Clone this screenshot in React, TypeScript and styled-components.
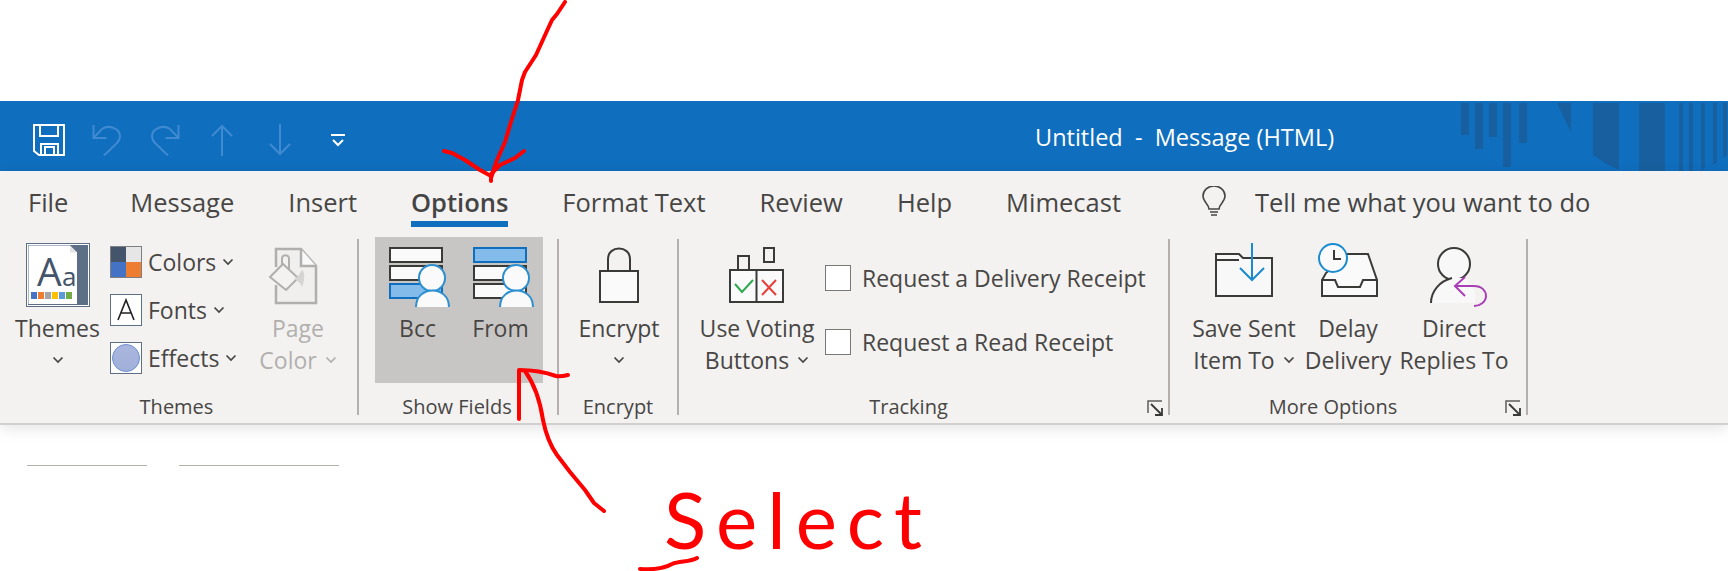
import styled, { createGlobalStyle } from 'styled-components';

const GlobalStyle = createGlobalStyle`
  html, body {
    margin: 0;
    padding: 0;
    background: #fff;
    overflow: hidden;
  }
  body {
    font-family: "Open Sans", "Noto Sans", "Liberation Sans", sans-serif;
    color: #444;
  }
`;

const Page = styled.div`
  position: relative;
  width: 1728px;
  height: 571px;
  overflow: hidden;
  padding-top: 101px;
  box-sizing: border-box;
`;

const TitleBar = styled.div`
  position: relative;
  height: 70px;
  background: #106ebe;
  display: flex;
  align-items: center;
  padding-left: 33px;
`;

const QuickAccess = styled.div`
  display: flex;
  align-items: center;
  width: 1002px;
  margin-top: 8px;
`;

const QatSlot = styled.span<{ $width: number }>`
  display: flex;
  width: ${({ $width }) => $width}px;
`;

const Title = styled.div`
  position: relative;
  color: #fff;
  font-size: 23.5px;
  margin-top: 2px;
  white-space: pre;
  z-index: 1;
`;

const TitleArt = styled.svg`
  position: absolute;
  top: 0;
  right: 0;
`;

const Ribbon = styled.div`
  height: 254px;
  background: #f3f2f1;
  border-bottom: 2px solid #d2d0ce;
  box-sizing: border-box;
  box-shadow: 0 4px 14px rgba(0, 0, 0, 0.1);
  position: relative;
`;

const TabRow = styled.div`
  height: 66px;
  display: flex;
  align-items: flex-start;
  gap: 54px;
  padding-left: 28px;
  font-size: 25.5px;
`;

const Tab = styled.div<{ $active?: boolean; $wide?: boolean }>`
  height: 50px;
  margin-top: 6px;
  line-height: 50px;
  margin-right: ${({ $wide }) => ($wide ? 8 : 0)}px;
  font-weight: ${({ $active }) => ($active ? 600 : 400)};
  color: ${({ $active }) => ($active ? '#444' : '#484644')};
  box-shadow: ${({ $active }) => ($active ? 'inset 0 -6px 0 #106ebe' : 'none')};
`;

const TellMe = styled.div`
  display: flex;
  align-items: center;
  gap: 29px;
  height: 50px;
  margin: 6px 0 0 27px;
`;

const GroupRow = styled.div`
  display: flex;
  height: 184px;
`;

const Group = styled.section<{ $width: number }>`
  position: relative;
  width: ${({ $width }) => $width}px;
  display: flex;
  flex-direction: column;
  &::after {
    content: '';
    position: absolute;
    top: 2px;
    right: 0;
    width: 2px;
    height: 176px;
    background: #b3b0ad;
  }
`;

const GroupBody = styled.div<{ $pad: number }>`
  display: flex;
  height: 146px;
  padding-left: ${({ $pad }) => $pad}px;
  box-sizing: border-box;
`;

const SelectedArea = styled.div`
  display: flex;
  background: #c8c6c4;
  width: 168px;
  height: 146px;
  padding-left: 14px;
  box-sizing: border-box;
`;

const GroupLabel = styled.div<{ $shift?: number }>`
  height: 38px;
  line-height: 48px;
  text-align: center;
  font-size: 20px;
  color: #484644;
  transform: translateX(${({ $shift }) => $shift ?? 0}px);
`;

const LargeButton = styled.div<{ $width: number; $disabled?: boolean; $gap?: number }>`
  width: ${({ $width }) => $width}px;
  margin-right: ${({ $gap }) => $gap ?? 0}px;
  display: flex;
  flex-direction: column;
  align-items: center;
  font-size: 23px;
  line-height: 32px;
  color: ${({ $disabled }) => ($disabled ? '#b1afad' : '#484644')};
  white-space: nowrap;
  flex-shrink: 0;
`;

const IconBox = styled.div<{ $top: number; $shift?: number }>`
  height: 75px;
  box-sizing: border-box;
  padding-top: ${({ $top }) => $top}px;
  display: flex;
  align-items: flex-start;
  transform: translateX(${({ $shift }) => $shift ?? 0}px);
`;

const LabelLine = styled.div`
  display: flex;
  align-items: center;
  justify-content: center;
  gap: 8px;
  height: 32px;
`;

const SmallColumn = styled.div`
  width: 138px;
  margin-left: 10px;
  padding-top: 9px;
  display: flex;
  flex-direction: column;
  gap: 16px;
  flex-shrink: 0;
`;

const SmallItem = styled.div`
  display: flex;
  align-items: center;
  height: 32px;
  gap: 6px;
  font-size: 23px;
  color: #484644;
`;

const CheckColumn = styled.div`
  margin: 28px 0 0 9px;
  display: flex;
  flex-direction: column;
  gap: 38px;
`;

const CheckRow = styled.div`
  display: flex;
  align-items: center;
  gap: 11px;
  height: 26px;
  font-size: 23px;
  color: #484644;
  white-space: nowrap;
`;

const Box = styled.span`
  width: 26px;
  height: 26px;
  box-sizing: border-box;
  border: 1px solid #7a7876;
  background: #fff;
`;

const Launcher = styled.svg`
  position: absolute;
  right: 7px;
  top: 163px;
`;

const DocumentRow = styled.div`
  display: flex;
  gap: 32px;
  padding: 40px 0 0 27px;
`;

const FieldRule = styled.div<{ $width: number }>`
  width: ${({ $width }) => $width}px;
  height: 1px;
  background: #b3b0ad;
`;

const Annotation = styled.svg`
  position: absolute;
  inset: 0;
  pointer-events: none;
  z-index: 5;
`;

const Scrawl = styled.div`
  position: absolute;
  left: 664px;
  top: 474px;
  font-family: "Lato", "Open Sans", sans-serif;
  font-size: 78px;
  line-height: 90px;
  letter-spacing: 10px;
  color: #f00;
  z-index: 6;
`;

const Chevron = ({ color = '#484644' }: { color?: string }) => (
  <svg width="12" height="8" viewBox="0 0 12 8">
    <path d="M1.5 1.5 6 6l4.5-4.5" fill="none" stroke={color} strokeWidth="1.7" />
  </svg>
);

const QAT_DIM = '#3f8ad0';

const SaveIcon = () => (
  <svg width="32" height="32" viewBox="0 0 32 32">
    <path d="M1 1h30v30H6L1 27z" fill="none" stroke="#fff" strokeWidth="2" />
    <path d="M7 1v11h18V1M8 31V20h17v11M12 31v-8h9v8" fill="none" stroke="#fff" strokeWidth="2" />
  </svg>
);

const UndoIcon = ({ flip }: { flip?: boolean }) => (
  <svg width="29" height="32" viewBox="0 0 29 32" style={{ transform: flip ? 'scaleX(-1)' : undefined }}>
    <path d="M1.5 1v13h13M1.5 14 10 5c7-5 18 0 18 7 0 3-1 5-3 7L12 31.5" fill="none" stroke={QAT_DIM} strokeWidth="2" />
  </svg>
);

const ArrowIcon = ({ down }: { down?: boolean }) => (
  <svg width="22" height="32" viewBox="0 0 22 32" style={{ transform: down ? 'scaleY(-1)' : undefined }}>
    <path d="M11 32V2M1 12 11 2l10 10" fill="none" stroke={QAT_DIM} strokeWidth="2" />
  </svg>
);

const CustomizeIcon = () => (
  <svg width="14" height="13" viewBox="0 0 14 13">
    <path d="M0 1h14" stroke="#fff" strokeWidth="2" />
    <path d="M2 6l5 5 5-5" fill="none" stroke="#fff" strokeWidth="2" />
  </svg>
);

const ThemesIcon = () => (
  <svg width="64" height="64" viewBox="0 0 64 64">
    <rect x=".5" y=".5" width="63" height="63" fill="#fff" stroke="#5d6e87" />
    <rect x="2" y="2" width="60" height="60" fill="#5d6e87" />
    <path d="M2.500 2.500H44l7 7V61H2.500z" fill="#fff" />
    <path d="M44 2.500 51 9.500h-7z" fill="#e3e3e3" />
    <text x="11" y="43" fontFamily="Open Sans" fontSize="39" fill="#44546a">A</text>
    <text x="36" y="43" fontFamily="Open Sans" fontSize="26" fill="#44546a">a</text>
    {['#4472c4', '#ed7d31', '#a5a5a5', '#ffc000', '#5b9bd5', '#70ad47'].map((c, i) => (
      <rect key={c} x={5 + i * 7} y="49" width="6" height="7" fill={c} />
    ))}
  </svg>
);

const ColorsIcon = () => (
  <svg width="32" height="32" viewBox="0 0 32 32">
    <rect width="16" height="16" fill="#44546a" />
    <rect x="16" width="16" height="16" fill="#e7e6e6" />
    <rect y="16" width="16" height="16" fill="#4472c4" />
    <rect x="16" y="16" width="16" height="16" fill="#ed7d31" />
    <rect x=".5" y=".5" width="31" height="31" fill="none" stroke="#7f7f7f" />
  </svg>
);

const FontsIcon = () => (
  <svg width="32" height="32" viewBox="0 0 32 32">
    <rect x=".5" y=".5" width="31" height="31" fill="#fff" stroke="#5d6e87" />
    <path d="M8 26 16 6l8 20M11 19h10" fill="none" stroke="#222" strokeWidth="1.6" />
  </svg>
);

const EffectsIcon = () => (
  <svg width="32" height="32" viewBox="0 0 32 32">
    <defs>
      <linearGradient id="fx" x1="0" y1="0" x2="0" y2="1">
        <stop offset="0" stopColor="#aab6de" />
        <stop offset="1" stopColor="#9fb0d8" />
      </linearGradient>
    </defs>
    <rect x=".5" y=".5" width="31" height="31" fill="#fff" stroke="#5d6e87" />
    <circle cx="16" cy="16" r="13.500" fill="url(#fx)" stroke="#6d8fd3" />
  </svg>
);

const PageColorIcon = () => (
  <svg width="50" height="58" viewBox="0 0 50 58">
    <path d="M7 20V2h25l15 17v37H7V38" fill="#f0efee" stroke="#b1afad" strokeWidth="2.500" />
    <path d="M32 2v17h15" fill="#f8f8f8" stroke="#b1afad" strokeWidth="2.500" />
    <path d="M1 30 14 17l15 14-12 12zM13 18v-6c0-5 7-5 7 0v11" fill="#f3f2f1" stroke="#b1afad" strokeWidth="2" />
    <path d="M33 23c4 2 2 13 0 17-2-6-6-6-8-8 4-2 6-6 8-9z" fill="#d5d4d2" />
  </svg>
);

const FieldsIcon = ({ lit }: { lit: number }) => (
  <svg width="61" height="60" viewBox="0 0 61 60">
    {[0, 18, 36].map((y, i) => (
      <rect
        key={y}
        x="1"
        y={y + 1}
        width="52"
        height="14"
        fill={i === lit ? '#83bbeb' : '#fafafa'}
        stroke={i === lit ? '#106ebe' : '#3a3a38'}
        strokeWidth="2"
      />
    ))}
    <circle cx="43" cy="31" r="13" fill="#fafafa" stroke="#2c8fcf" strokeWidth="2" />
    <path d="M27 60c0-22 33-22 33 0z" fill="#fafafa" />
    <path d="M27 60c0-22 33-22 33 0" fill="none" stroke="#2c8fcf" strokeWidth="2" />
  </svg>
);

const LockIcon = () => (
  <svg width="40" height="56" viewBox="0 0 40 56">
    <rect x="1" y="24" width="38" height="31" fill="#fafafa" stroke="#3a3a38" strokeWidth="2" />
    <path d="M9 24V12c0-14 22-14 22 0v12" fill="none" stroke="#3a3a38" strokeWidth="2" />
  </svg>
);

const VotingIcon = () => (
  <svg width="56" height="56" viewBox="0 0 56 56">
    <rect x="9" y="9" width="11" height="14" fill="none" stroke="#3a3a38" strokeWidth="2" />
    <rect x="35" y="1" width="10" height="14" fill="none" stroke="#3a3a38" strokeWidth="2" />
    <rect x="1" y="23" width="53" height="32" fill="#fafafa" stroke="#3a3a38" strokeWidth="2" />
    <path d="M27.500 23v32" stroke="#3a3a38" strokeWidth="2" />
    <path d="M6 37l7 8L24 33" fill="none" stroke="#2fa84f" strokeWidth="2" />
    <path d="M33 33l14 15M47 33 33 48" fill="none" stroke="#e8413a" strokeWidth="2" />
  </svg>
);

const FolderIcon = () => (
  <svg width="58" height="54" viewBox="0 0 58 54">
    <path d="M1 11h23l4 4h29v38H1z" fill="#f8f8f8" stroke="#3a3a38" strokeWidth="2" />
    <path d="M1 17h23" stroke="#3a3a38" strokeWidth="2" />
    <path d="M37 0v37M25 25l12 12 12-12" fill="none" stroke="#1b8bd0" strokeWidth="2" />
  </svg>
);

const InboxClockIcon = () => (
  <svg width="60" height="54" viewBox="0 0 60 54">
    <path d="M28 11h22l9 26v16H4V37l4-7z" fill="#fafafa" stroke="#3a3a38" strokeWidth="2" />
    <path d="M4 37h13l3 7h22l3-7h14" fill="none" stroke="#3a3a38" strokeWidth="2" />
    <circle cx="15" cy="15" r="14" fill="#fafafa" stroke="#1b8bd0" strokeWidth="2" />
    <path d="M16 7v9h7" fill="none" stroke="#3a3a38" strokeWidth="2" />
  </svg>
);

const ReplyPersonIcon = () => (
  <svg width="58" height="60" viewBox="0 0 58 60">
    <circle cx="24" cy="17" r="16" fill="#f8f8f8" stroke="#3a3a38" strokeWidth="2" />
    <path d="M1 56c0-12 9-22 20-25h14l10 14v11z" fill="#f8f8f8" />
    <path d="M1 56c0-12 9-22 21-25" fill="none" stroke="#3a3a38" strokeWidth="2" />
    <path d="M35 30 25 39l10 10M25 39h19c8 0 12 5 12 10 0 6-6 10-12 10" fill="none" stroke="#a83fb5" strokeWidth="2" />
  </svg>
);

const BulbIcon = () => (
  <svg width="24" height="32" viewBox="0 0 24 32">
    <path d="M7 23c0-5-6-7-6-13a11 10 0 0 1 22 0c0 6-6 8-6 13z" fill="none" stroke="#484644" strokeWidth="1.600" />
    <path d="M8 26h8M9 29h6" stroke="#484644" strokeWidth="1.600" />
  </svg>
);

const LauncherIcon = () => (
  <Launcher width="16" height="16" viewBox="0 0 16 16">
    <path d="M1 13V1h14" fill="none" stroke="#605e5c" strokeWidth="1.500" />
    <path d="M4 4l10 10M15 8v7H8" fill="none" stroke="#3a3a38" strokeWidth="1.800" />
  </Launcher>
);

const TAB_NAMES = ['Message', 'Insert'];
const TAB_NAMES_AFTER = ['Format Text', 'Review', 'Help', 'Mimecast'];

export default function App() {
  return (
    <Page>
      <GlobalStyle />
      <TitleBar>
        <QuickAccess>
          <QatSlot $width={59}><SaveIcon /></QatSlot>
          <QatSlot $width={59}><UndoIcon /></QatSlot>
          <QatSlot $width={60}><UndoIcon flip /></QatSlot>
          <QatSlot $width={58}><ArrowIcon /></QatSlot>
          <QatSlot $width={62}><ArrowIcon down /></QatSlot>
          <QatSlot $width={14}><CustomizeIcon /></QatSlot>
        </QuickAccess>
        <Title>{'Untitled  -  Message (HTML)'}</Title>
        <TitleArt width="267" height="70" viewBox="1461 101 267 70">
          <path
            fill="#175f9e"
            d="M1461 103h8v32h-8zM1475 103h8v46h-8zM1489 103h8v34h-8zM1503 103h8v64h-8zM1519 103h8v40h-8zM1557 103h14v29zM1593 103h26v67l-14-7-12-8zM1639 103h26v68h-26zM1679 103h4v68h-4zM1689 103h4v68h-4zM1701 103h4v65l-4 3zM1713 103h4v59l-4 3zM1723 103h4v52l-4 3z"
          />
        </TitleArt>
      </TitleBar>
      <Ribbon>
        <TabRow>
          <Tab $wide>File</Tab>
          {TAB_NAMES.map((name) => (
            <Tab key={name}>{name}</Tab>
          ))}
          <Tab $active>Options</Tab>
          {TAB_NAMES_AFTER.map((name) => (
            <Tab key={name}>{name}</Tab>
          ))}
          <TellMe>
            <BulbIcon />
            <span>Tell me what you want to do</span>
          </TellMe>
        </TabRow>
        <GroupRow>
          <Group $width={359}>
            <GroupBody $pad={15}>
              <LargeButton $width={85}>
                <IconBox $top={6}><ThemesIcon /></IconBox>
                <LabelLine>Themes</LabelLine>
                <LabelLine><Chevron /></LabelLine>
              </LargeButton>
              <SmallColumn>
                <SmallItem><ColorsIcon />Colors <Chevron /></SmallItem>
                <SmallItem><FontsIcon />Fonts <Chevron /></SmallItem>
                <SmallItem><EffectsIcon />Effects <Chevron /></SmallItem>
              </SmallColumn>
              <LargeButton $disabled $width={100}>
                <IconBox $top={10} $shift={-4}><PageColorIcon /></IconBox>
                <LabelLine>Page</LabelLine>
                <LabelLine>Color <Chevron color="#b1afad" /></LabelLine>
              </LargeButton>
            </GroupBody>
            <GroupLabel $shift={-3}>Themes</GroupLabel>
          </Group>
          <Group $width={200}>
            <GroupBody $pad={16}>
              <SelectedArea>
                <LargeButton $width={57} $gap={27}>
                  <IconBox $top={10} $shift={2}><FieldsIcon lit={2} /></IconBox>
                  <LabelLine>Bcc</LabelLine>
                </LargeButton>
                <LargeButton $width={55}>
                  <IconBox $top={10} $shift={3}><FieldsIcon lit={0} /></IconBox>
                  <LabelLine>From</LabelLine>
                </LargeButton>
              </SelectedArea>
            </GroupBody>
            <GroupLabel $shift={-2}>Show Fields</GroupLabel>
          </Group>
          <Group $width={120}>
            <GroupBody $pad={10}>
              <LargeButton $width={100}>
                <IconBox $top={10}><LockIcon /></IconBox>
                <LabelLine>Encrypt</LabelLine>
                <LabelLine><Chevron /></LabelLine>
              </LargeButton>
            </GroupBody>
            <GroupLabel $shift={-1}>Encrypt</GroupLabel>
          </Group>
          <Group $width={491}>
            <GroupBody $pad={19}>
              <LargeButton $width={118}>
                <IconBox $top={10}><VotingIcon /></IconBox>
                <LabelLine>Use Voting</LabelLine>
                <LabelLine>Buttons <Chevron /></LabelLine>
              </LargeButton>
              <CheckColumn>
                <CheckRow><Box />Request a Delivery Receipt</CheckRow>
                <CheckRow><Box />Request a Read Receipt</CheckRow>
              </CheckColumn>
            </GroupBody>
            <GroupLabel $shift={-16}>Tracking</GroupLabel>
            <LauncherIcon />
          </Group>
          <Group $width={358}>
            <GroupBody $pad={17}>
              <LargeButton $width={114} $gap={3}>
                <IconBox $top={6}><FolderIcon /></IconBox>
                <LabelLine>Save Sent</LabelLine>
                <LabelLine>Item To <Chevron /></LabelLine>
              </LargeButton>
              <LargeButton $width={88} $gap={9}>
                <IconBox $top={6}><InboxClockIcon /></IconBox>
                <LabelLine>Delay</LabelLine>
                <LabelLine>Delivery</LabelLine>
              </LargeButton>
              <LargeButton $width={106}>
                <IconBox $top={10} $shift={5}><ReplyPersonIcon /></IconBox>
                <LabelLine>Direct</LabelLine>
                <LabelLine>Replies To</LabelLine>
              </LargeButton>
            </GroupBody>
            <GroupLabel $shift={-16}>More Options</GroupLabel>
            <LauncherIcon />
          </Group>
        </GroupRow>
      </Ribbon>
      <DocumentRow>
        <FieldRule $width={120} />
        <FieldRule $width={160} />
      </DocumentRow>
      <Annotation width="1728" height="571" viewBox="0 0 1728 571">
        <g fill="none" stroke="#f00" strokeWidth="4" strokeLinecap="round" strokeLinejoin="round">
          <path d="M565 2 557 14 552 20 546 33 536 55 525 72 522 80 518 100 510 125 505 142 497 160 491 178" />
          <path d="M444 151 452 153 465 160 480 170 491 176 491 181" />
          <path d="M524 151 515 158 500 165 492 173" />
          <path d="M519 419V370C530 370 545 372 556 376 560 377 564 376 568 375" />
          <path d="M525 371C535 385 540 400 543 420 546 435 552 448 557 455L570 472 585 490 594 503 604 511" />
          <path d="M640 569C655 570 665 568 672 564 680 561 690 562 697 558" />
        </g>
      </Annotation>
      <Scrawl>Select</Scrawl>
    </Page>
  );
}
